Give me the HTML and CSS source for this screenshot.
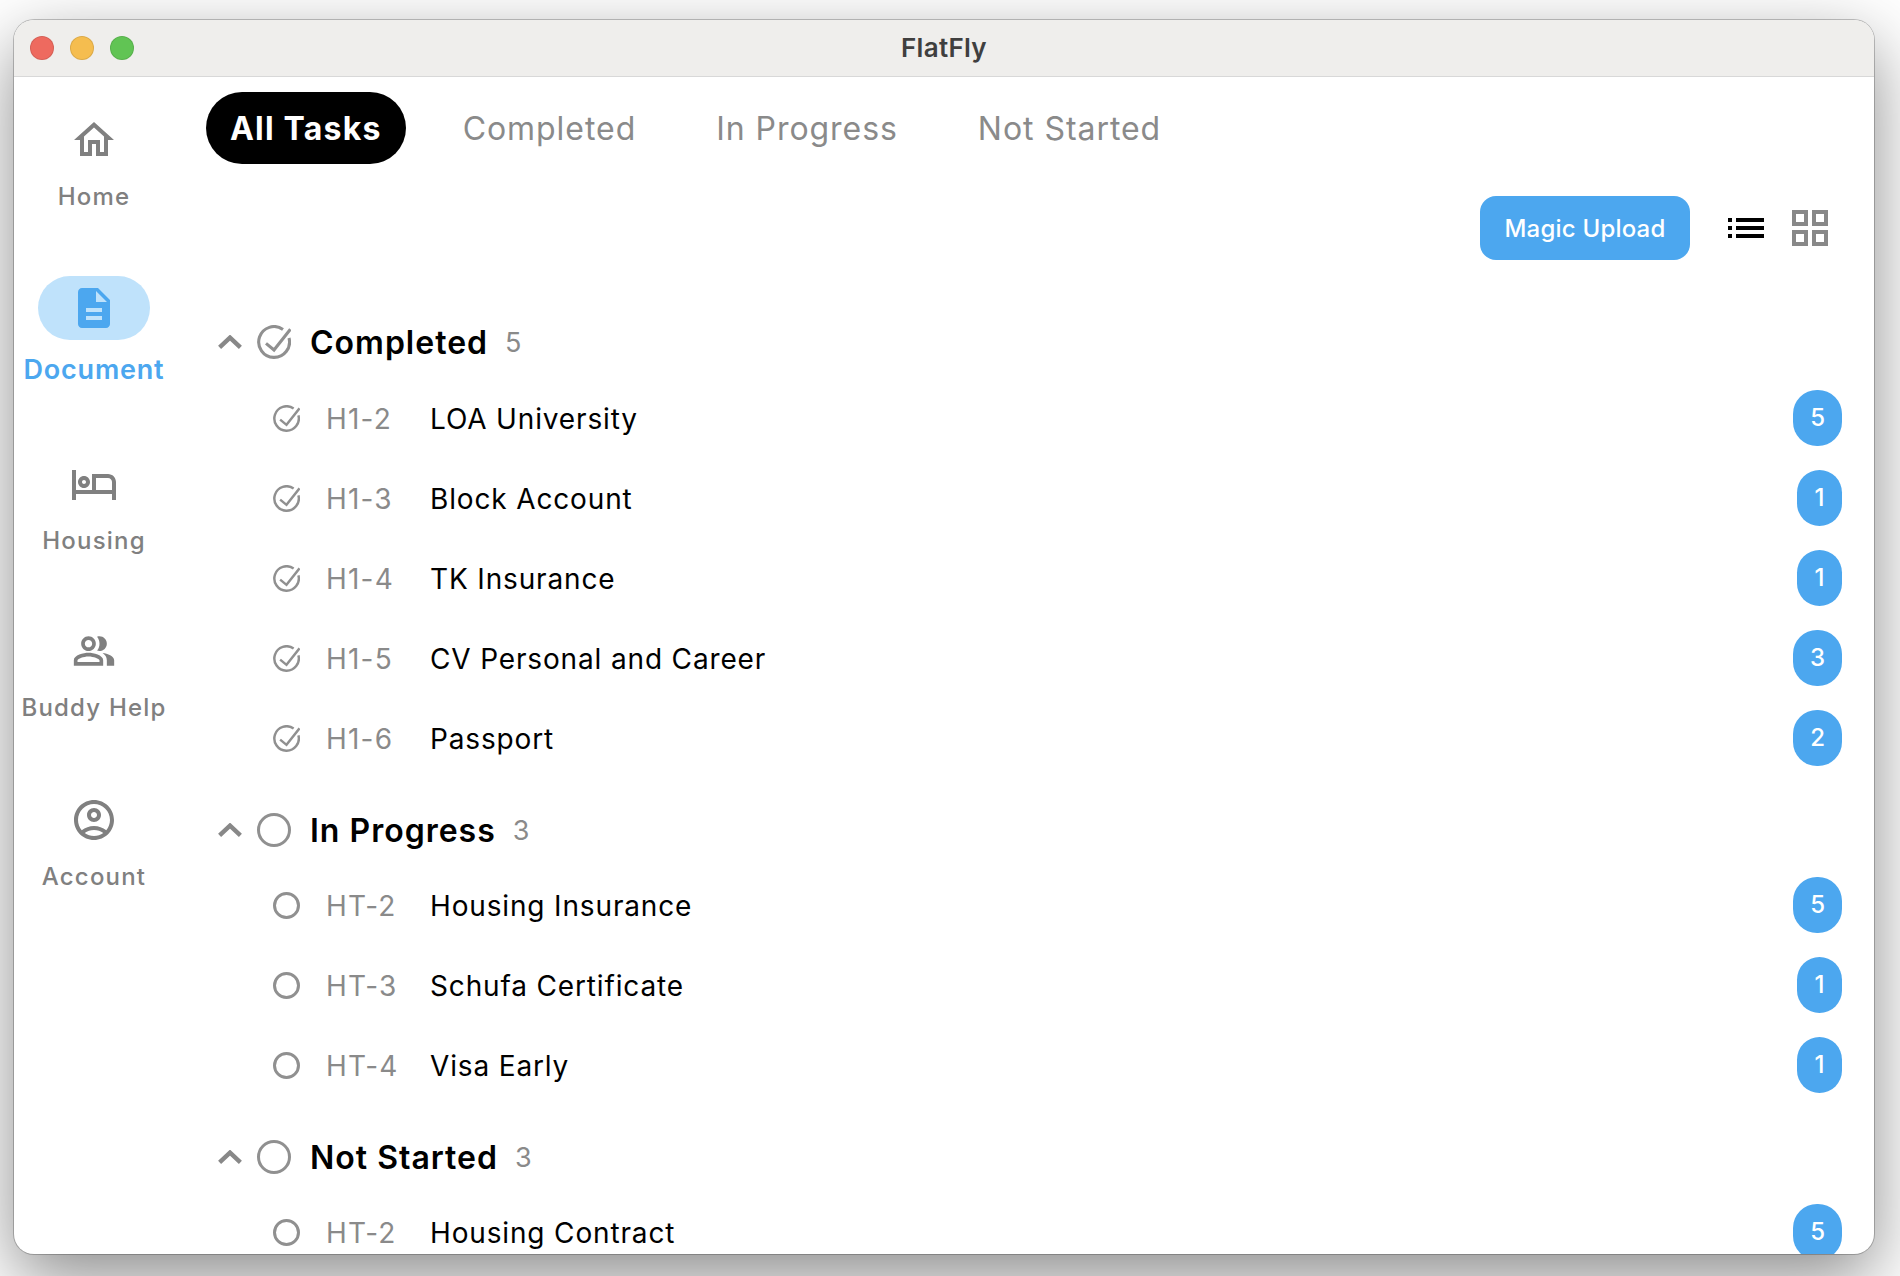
FILE: index.html

```html
<!DOCTYPE html>
<html lang="en">
<head>
    <meta charset="UTF-8">
    <title>FlatFly</title>
    <link rel="stylesheet" href="styles.css">
</head>
<body>
    <svg class="defs" width="0" height="0">
        <symbol id="check" viewBox="0 0 34 34">
            <path d="M26 4.4A15.4 15.4 0 1 0 32 13" fill="none" stroke-width="3.1"/>
            <path d="M9 18.4L17 25L33.4 4.2" fill="none" stroke-width="3.1"/>
        </symbol>
        <symbol id="chev" viewBox="0 0 24 14">
            <path d="M1.6 12.4L12 2.6L22.4 12.4" fill="none" stroke-width="4.4"/>
        </symbol>
    </svg>
    <div class="window">
        <div class="titlebar">
            <div class="lights">
                <span class="light red"></span>
                <span class="light yellow"></span>
                <span class="light green"></span>
            </div>
            <div class="wintitle">FlatFly</div>
        </div>
        <div class="app">
            <div class="sidebar">
                <div class="nav nav-home">
                    <div class="nav-icon"><svg width="48" height="48" viewBox="0 0 24 24"><path d="M12 5.69l5 4.5V18h-2v-6H9v6H7v-7.81l5-4.5M12 3L2 12h3v8h6v-6h2v6h6v-8h3L12 3z"/></svg></div>
                    <div class="nav-label">Home</div>
                </div>
                <div class="nav nav-active">
                    <div class="nav-icon"><svg width="48" height="48" viewBox="0 0 24 24"><path d="M14 2H6c-1.1 0-1.99.9-1.99 2L4 20c0 1.1.89 2 1.99 2H18c1.1 0 2-.9 2-2V8l-6-6zm2 16H8v-2h8v2zm0-4H8v-2h8v2zm-3-5V3.5L18.5 9H13z"/></svg></div>
                    <div class="nav-label">Document</div>
                </div>
                <div class="nav">
                    <div class="nav-icon"><svg width="48" height="48" viewBox="0 0 24 24"><path d="M7 14c1.66 0 3-1.34 3-3S8.66 8 7 8s-3 1.34-3 3 1.34 3 3 3zm0-4c.55 0 1 .45 1 1s-.45 1-1 1-1-.45-1-1 .45-1 1-1zm12-3h-8v8H3V5H1v15h2v-3h18v3h2v-9c0-2.21-1.79-4-4-4zm2 8h-8V9h6c1.1 0 2 .9 2 2v4z"/></svg></div>
                    <div class="nav-label">Housing</div>
                </div>
                <div class="nav nav-buddy">
                    <div class="nav-icon"><svg width="44" height="44" viewBox="0 0 24 24"><path d="M16.67 13.13C18.04 14.06 19 15.32 19 17v3h4v-3c0-2.18-3.57-3.47-6.33-3.87z"/><path d="M15 12c2.21 0 4-1.79 4-4s-1.79-4-4-4c-.47 0-.91.1-1.33.24C14.5 5.27 15 6.58 15 8s-.5 2.73-1.33 3.76c.42.14.86.24 1.33.24z"/><path d="M9 12c2.21 0 4-1.79 4-4s-1.79-4-4-4-4 1.79-4 4 1.79 4 4 4zm0-6c1.1 0 2 .9 2 2s-.9 2-2 2-2-.9-2-2 .9-2 2-2z"/><path d="M9 13c-2.67 0-8 1.34-8 4v3h16v-3c0-2.66-5.33-4-8-4zm6 5H3v-.99C3.2 16.29 6.3 15 9 15s5.8 1.29 6 2v1z"/></svg></div>
                    <div class="nav-label">Buddy Help</div>
                </div>
                <div class="nav">
                    <div class="nav-icon"><svg width="48" height="48" viewBox="0 0 24 24"><path d="M12 2C6.48 2 2 6.48 2 12s4.48 10 10 10 10-4.48 10-10S17.52 2 12 2zM7.35 18.5C8.66 17.56 10.26 17 12 17s3.34.56 4.65 1.5C15.34 19.44 13.74 20 12 20s-3.34-.56-4.65-1.5zm10.79-1.38C16.45 15.8 14.32 15 12 15s-4.45.8-6.14 2.12C4.7 15.73 4 13.95 4 12c0-4.42 3.58-8 8-8s8 3.58 8 8c0 1.95-.7 3.73-1.86 5.12z"/><path d="M12 6c-1.93 0-3.5 1.57-3.5 3.5S10.07 13 12 13s3.5-1.57 3.5-3.5S13.93 6 12 6zm0 5c-.83 0-1.5-.67-1.5-1.5S11.17 8 12 8s1.5.67 1.5 1.5S12.83 11 12 11z"/></svg></div>
                    <div class="nav-label">Account</div>
                </div>
            </div>
            <div class="main">
                <div class="tabs">
                    <div class="tab tab-active">All Tasks</div>
                    <div class="tab">Completed</div>
                    <div class="tab">In Progress</div>
                    <div class="tab">Not Started</div>
                </div>
                <div class="toolbar">
                    <button class="upload">Magic Upload</button>
                    <svg class="list-icon" width="36" height="20" viewBox="0 0 36 20"><path d="M0 0h4v4H0zM8 0h28v4H8zM0 8h4v4H0zM8 8h28v4H8zM0 16h4v4H0zM8 16h28v4H8z"/></svg>
                    <svg class="grid-icon" width="36" height="36" viewBox="0 0 36 36"><path d="M2 2h12v12H2zM22 2h12v12H22zM2 22h12v12H2zM22 22h12v12H22z"/></svg>
                </div>

                <div class="section">
                    <div class="sec-head">
                        <svg class="chev"><use href="#chev"/></svg>
                        <svg class="ring-lg"><use href="#check"/></svg>
                        <span class="sec-title">Completed</span>
                        <span class="sec-count">5</span>
                    </div>
                    <div class="row">
                        <svg class="ring-sm"><use href="#check"/></svg>
                        <span class="row-id">H1-2</span>
                        <span class="row-name">LOA University</span>
                        <span class="badge">5</span>
                    </div>
                    <div class="row">
                        <svg class="ring-sm"><use href="#check"/></svg>
                        <span class="row-id">H1-3</span>
                        <span class="row-name">Block Account</span>
                        <span class="badge">1</span>
                    </div>
                    <div class="row">
                        <svg class="ring-sm"><use href="#check"/></svg>
                        <span class="row-id">H1-4</span>
                        <span class="row-name">TK Insurance</span>
                        <span class="badge">1</span>
                    </div>
                    <div class="row">
                        <svg class="ring-sm"><use href="#check"/></svg>
                        <span class="row-id">H1-5</span>
                        <span class="row-name">CV Personal and Career</span>
                        <span class="badge">3</span>
                    </div>
                    <div class="row">
                        <svg class="ring-sm"><use href="#check"/></svg>
                        <span class="row-id">H1-6</span>
                        <span class="row-name">Passport</span>
                        <span class="badge">2</span>
                    </div>
                </div>

                <div class="section">
                    <div class="sec-head">
                        <svg class="chev"><use href="#chev"/></svg>
                        <span class="ring ring-lg"></span>
                        <span class="sec-title">In Progress</span>
                        <span class="sec-count">3</span>
                    </div>
                    <div class="row">
                        <span class="ring ring-sm"></span>
                        <span class="row-id">HT-2</span>
                        <span class="row-name">Housing Insurance</span>
                        <span class="badge">5</span>
                    </div>
                    <div class="row">
                        <span class="ring ring-sm"></span>
                        <span class="row-id">HT-3</span>
                        <span class="row-name">Schufa Certificate</span>
                        <span class="badge">1</span>
                    </div>
                    <div class="row">
                        <span class="ring ring-sm"></span>
                        <span class="row-id">HT-4</span>
                        <span class="row-name">Visa Early</span>
                        <span class="badge">1</span>
                    </div>
                </div>

                <div class="section">
                    <div class="sec-head">
                        <svg class="chev"><use href="#chev"/></svg>
                        <span class="ring ring-lg"></span>
                        <span class="sec-title">Not Started</span>
                        <span class="sec-count">3</span>
                    </div>
                    <div class="row">
                        <span class="ring ring-sm"></span>
                        <span class="row-id">HT-2</span>
                        <span class="row-name">Housing Contract</span>
                        <span class="badge">5</span>
                    </div>
                </div>
            </div>
        </div>
    </div>
</body>
</html>
```

FILE: styles.css

```css
* {
    box-sizing: border-box;
}
html, body {
    margin: 0;
    height: 100%;
    overflow: hidden;
}
body {
    background: #fff;
    font-family: Inter, "Liberation Sans", sans-serif;
    padding: 20px 26px 22px 14px;
}
.defs {
    display: block;
    height: 0;
}
.window {
    height: 1234px;
    background: #fff;
    border-radius: 20px;
    overflow: hidden;
    box-shadow: 0 0 0 1px rgba(0, 0, 0, 0.22), 0 24px 70px rgba(0, 0, 0, 0.46);
    display: flex;
    flex-direction: column;
}
.titlebar {
    height: 57px;
    flex: none;
    background: #efeeec;
    border-bottom: 1px solid #d8d8d8;
    display: flex;
    align-items: center;
    position: relative;
}
.lights {
    display: flex;
    gap: 16px;
    padding-left: 16px;
}
.light {
    width: 24px;
    height: 24px;
    border-radius: 50%;
    border: 1px solid rgba(0, 0, 0, 0.1);
}
.red { background: #ee6a5f; }
.yellow { background: #f5bd4f; }
.green { background: #61c454; }
.wintitle {
    position: absolute;
    left: 0;
    right: 0;
    padding-bottom: 2px;
    text-align: center;
    font-size: 26px;
    font-weight: 600;
    letter-spacing: 0.3px;
    color: #3f3f3f;
}
.app {
    flex: 1;
    display: flex;
    min-height: 0;
}
.sidebar {
    width: 160px;
    flex: none;
    padding-top: 31px;
    display: flex;
    flex-direction: column;
    align-items: center;
}
.nav {
    display: flex;
    flex-direction: column;
    align-items: center;
    margin-bottom: 61px;
    color: #808080;
}
.nav-home {
    margin-bottom: 62px;
}
.nav-buddy {
    margin-bottom: 63px;
}
.nav-icon {
    width: 112px;
    height: 64px;
    border-radius: 32px;
    display: flex;
    align-items: center;
    justify-content: center;
}
.nav-icon svg {
    fill: #808080;
}
.nav-label {
    margin-top: 8px;
    height: 34px;
    line-height: 34px;
    font-size: 24px;
    font-weight: 500;
    letter-spacing: 1.2px;
    white-space: nowrap;
}
.nav-active {
    margin-bottom: 65px;
}
.nav-active .nav-icon {
    background: #bfe2fb;
}
.nav-active .nav-icon svg {
    fill: #4ca7ef;
}
.nav-active .nav-label {
    margin-top: 13px;
    color: #4ca7ef;
    font-size: 27px;
    font-weight: 600;
    letter-spacing: 0.8px;
}
.main {
    flex: 1;
    min-width: 0;
    padding-left: 32px;
    overflow: hidden;
}
.tabs {
    display: flex;
    gap: 32px;
    padding-top: 15px;
}
.tab {
    height: 72px;
    line-height: 74px;
    padding: 0 24px;
    border-radius: 36px;
    font-size: 32px;
    letter-spacing: 0.95px;
    color: #8a8a8a;
}
.tab-active {
    background: #000;
    color: #fff;
    font-weight: 700;
    letter-spacing: 1.2px;
    margin-right: 1px;
}
.toolbar {
    display: flex;
    align-items: center;
    justify-content: flex-end;
    margin-top: 32px;
    padding-right: 46px;
}
.upload {
    width: 210px;
    height: 64px;
    border: none;
    border-radius: 16px;
    background: #4ca7ef;
    color: #fff;
    font-family: inherit;
    font-size: 24px;
    font-weight: 500;
    letter-spacing: 0.2px;
}
.list-icon {
    margin-left: 38px;
    fill: #000;
}
.grid-icon {
    margin-left: 28px;
    fill: none;
    stroke: #888;
    stroke-width: 4;
}
.section {
    margin-top: 60px;
    padding-right: 32px;
}
.section + .section {
    margin-top: 29px;
}
.sec-head {
    height: 44px;
    display: flex;
    align-items: center;
    padding-left: 12px;
    margin-bottom: 15px;
}
.section + .section .sec-head {
    margin-bottom: 14px;
}
.chev {
    width: 24px;
    height: 14px;
    stroke: #888;
}
.ring-lg {
    width: 34px;
    height: 34px;
    margin-left: 15px;
    margin-right: 19px;
    stroke: #909090;
    flex: none;
}
.sec-title {
    font-size: 32px;
    font-weight: 600;
    letter-spacing: 1px;
    color: #000;
}
.sec-count {
    margin-left: 17px;
    font-size: 27px;
    color: #8a8a8a;
}
.ring {
    display: block;
    border: 3px solid #909090;
    border-radius: 50%;
}
.row {
    height: 80px;
    display: flex;
    align-items: center;
    padding-left: 67px;
}
.ring-sm {
    width: 27px;
    height: 27px;
    margin-right: 26px;
    margin-bottom: 2px;
    stroke: #909090;
    flex: none;
}
.row-id {
    width: 104px;
    flex: none;
    font-size: 28px;
    letter-spacing: 1.2px;
    color: #8a8a8a;
}
.row-name {
    flex: 1;
    font-size: 28px;
    letter-spacing: 0.85px;
    color: #000;
}
.badge {
    height: 56px;
    line-height: 56px;
    min-width: 45px;
    margin-bottom: 2px;
    padding: 0 17px;
    text-align: center;
    border-radius: 24px;
    background: #4ca7ef;
    color: #fff;
    font-size: 24px;
    font-weight: 500;
}
```
